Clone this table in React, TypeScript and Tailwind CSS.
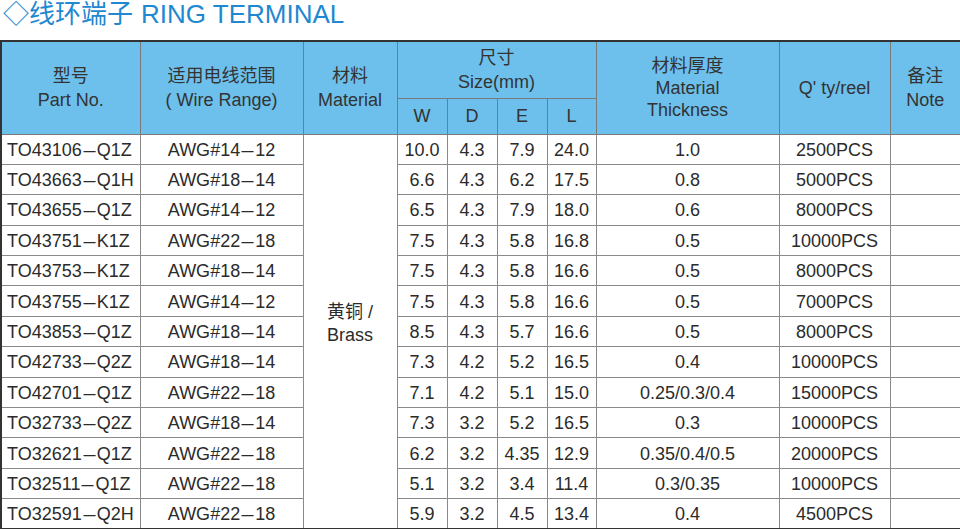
import React from "react";

const rows: string[][] = [
  ["TO43106", "Q1Z", "AWG#14", "12", "10.0", "4.3", "7.9", "24.0", "1.0", "2500PCS"],
  ["TO43663", "Q1H", "AWG#18", "14", "6.6", "4.3", "6.2", "17.5", "0.8", "5000PCS"],
  ["TO43655", "Q1Z", "AWG#14", "12", "6.5", "4.3", "7.9", "18.0", "0.6", "8000PCS"],
  ["TO43751", "K1Z", "AWG#22", "18", "7.5", "4.3", "5.8", "16.8", "0.5", "10000PCS"],
  ["TO43753", "K1Z", "AWG#18", "14", "7.5", "4.3", "5.8", "16.6", "0.5", "8000PCS"],
  ["TO43755", "K1Z", "AWG#14", "12", "7.5", "4.3", "5.8", "16.6", "0.5", "7000PCS"],
  ["TO43853", "Q1Z", "AWG#18", "14", "8.5", "4.3", "5.7", "16.6", "0.5", "8000PCS"],
  ["TO42733", "Q2Z", "AWG#18", "14", "7.3", "4.2", "5.2", "16.5", "0.4", "10000PCS"],
  ["TO42701", "Q1Z", "AWG#22", "18", "7.1", "4.2", "5.1", "15.0", "0.25/0.3/0.4", "15000PCS"],
  ["TO32733", "Q2Z", "AWG#18", "14", "7.3", "3.2", "5.2", "16.5", "0.3", "10000PCS"],
  ["TO32621", "Q1Z", "AWG#22", "18", "6.2", "3.2", "4.35", "12.9", "0.35/0.4/0.5", "20000PCS"],
  ["TO32511", "Q1Z", "AWG#22", "18", "5.1", "3.2", "3.4", "11.4", "0.3/0.35", "10000PCS"],
  ["TO32591", "Q2H", "AWG#22", "18", "5.9", "3.2", "4.5", "13.4", "0.4", "4500PCS"],
];

const th = "border border-[#7a7a7a] bg-[#6dc0ec] font-normal text-[#333] text-center align-middle leading-[24px] p-0";
const td = "border border-[#8a8a8a] text-center align-middle p-0 h-[30.4px] leading-[20px] pt-[1px]";

function Dash() {
  return <span className="inline-block w-[15px] text-center scale-x-[1.2]">–</span>;
}

export default function App() {
  return (
    <div
      className="w-[960px] h-[529px] bg-white overflow-hidden text-[18px] text-[#2b2b2b]"
      style={{ fontFamily: '"Liberation Sans", "Noto Sans CJK SC", sans-serif' }}
    >
      <div className="h-[40px] pl-[3px] pt-[1px] text-[26px] leading-[27px] text-[#1f88d0] whitespace-nowrap">
        ◇线环端子<span className="ml-[8px]">RING TERMINAL</span>
      </div>
      <table className="table-fixed border-collapse w-[960px] border-2 border-[#333]">
        <colgroup>
          <col className="w-[139px]" />
          <col className="w-[163px]" />
          <col className="w-[94px]" />
          <col className="w-[50px]" />
          <col className="w-[50px]" />
          <col className="w-[50px]" />
          <col className="w-[49px]" />
          <col className="w-[183px]" />
          <col className="w-[111px]" />
          <col className="w-[71px]" />
        </colgroup>
        <thead>
          <tr className="h-[57px]">
            <th rowSpan={2} className={th}>
              <div>型号</div>
              <div>Part No.</div>
            </th>
            <th rowSpan={2} className={th}>
              <div>适用电线范围</div>
              <div>( Wire Range)</div>
            </th>
            <th rowSpan={2} className={th}>
              <div>材料</div>
              <div>Material</div>
            </th>
            <th colSpan={4} className={th}>
              <div>尺寸</div>
              <div>Size(mm)</div>
            </th>
            <th rowSpan={2} className={th}>
              <div className="leading-[22px]">材料厚度</div>
              <div className="leading-[22px]">Material</div>
              <div className="leading-[22px]">Thickness</div>
            </th>
            <th rowSpan={2} className={th}>
              Q' ty/reel
            </th>
            <th rowSpan={2} className={th}>
              <div>备注</div>
              <div>Note</div>
            </th>
          </tr>
          <tr className="h-[36px]">
            <th className={th}>W</th>
            <th className={th}>D</th>
            <th className={th}>E</th>
            <th className={th}>L</th>
          </tr>
        </thead>
        <tbody>
          {rows.map((r, i) => (
            <tr key={i}>
              <td className={td + " text-left pl-[5px] whitespace-nowrap"}>
                {r[0]}
                <Dash />
                {r[1]}
              </td>
              <td className={td + " whitespace-nowrap"}>
                {r[2]}
                <Dash />
                {r[3]}
              </td>
              {i === 0 && (
                <td rowSpan={rows.length} className="border border-[#8a8a8a] text-center align-middle p-0 pb-[15px] leading-[23px]">
                  <div>黄铜 /</div>
                  <div>Brass</div>
                </td>
              )}
              <td className={td}>{r[4]}</td>
              <td className={td}>{r[5]}</td>
              <td className={td}>{r[6]}</td>
              <td className={td}>{r[7]}</td>
              <td className={td}>{r[8]}</td>
              <td className={td}>{r[9]}</td>
              <td className={td}></td>
            </tr>
          ))}
        </tbody>
      </table>
    </div>
  );
}
